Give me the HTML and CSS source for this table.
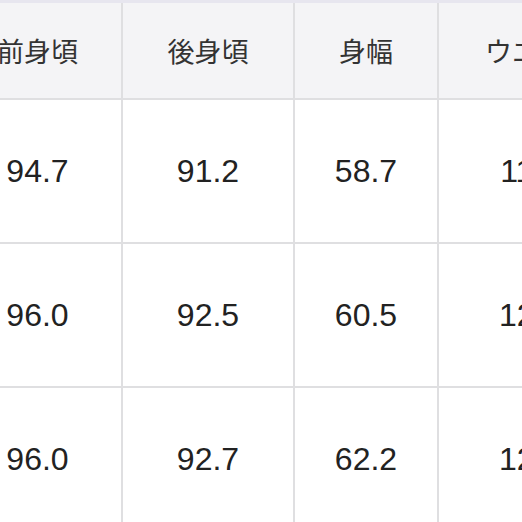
FILE: index.html
```html
<!DOCTYPE html>
<html lang="ja">
<head>
<meta charset="utf-8">
<link rel="stylesheet" href="styles.css">
</head>
<body>
<div class="size-table">
  <div class="cell head">前身頃</div>
  <div class="cell head">後身頃</div>
  <div class="cell head">身幅</div>
  <div class="cell head">ウエスト</div>

  <div class="cell num">94.7</div>
  <div class="cell num">91.2</div>
  <div class="cell num">58.7</div>
  <div class="cell num">118.0</div>

  <div class="cell num">96.0</div>
  <div class="cell num">92.5</div>
  <div class="cell num">60.5</div>
  <div class="cell num">122.0</div>

  <div class="cell num">96.0</div>
  <div class="cell num">92.7</div>
  <div class="cell num">62.2</div>
  <div class="cell num">126.0</div>
</div>
</body>
</html>
```

FILE: styles.css
```css
html, body {
  margin: 0;
  padding: 0;
  background: #ffffff;
  overflow: hidden;
}

.size-table {
  display: grid;
  grid-template-columns: 167px 170px 142px 200px;
  grid-template-rows: 95px 142px 142px 142px;
  gap: 2px;
  background: #dfdfe1;
  border-top: 3px solid #e7e6ef;
  margin-left: -46px;
  width: max-content;
}

.cell {
  display: flex;
  align-items: center;
  justify-content: center;
  background: #ffffff;
}

.head {
  background: #f4f4f6;
  font-family: "Noto Sans CJK JP", "Noto Sans", sans-serif;
  font-size: 27px;
  color: #333333;
}

.num {
  font-family: "Liberation Sans", Arial, sans-serif;
  font-size: 32px;
  color: #222222;
}
```
